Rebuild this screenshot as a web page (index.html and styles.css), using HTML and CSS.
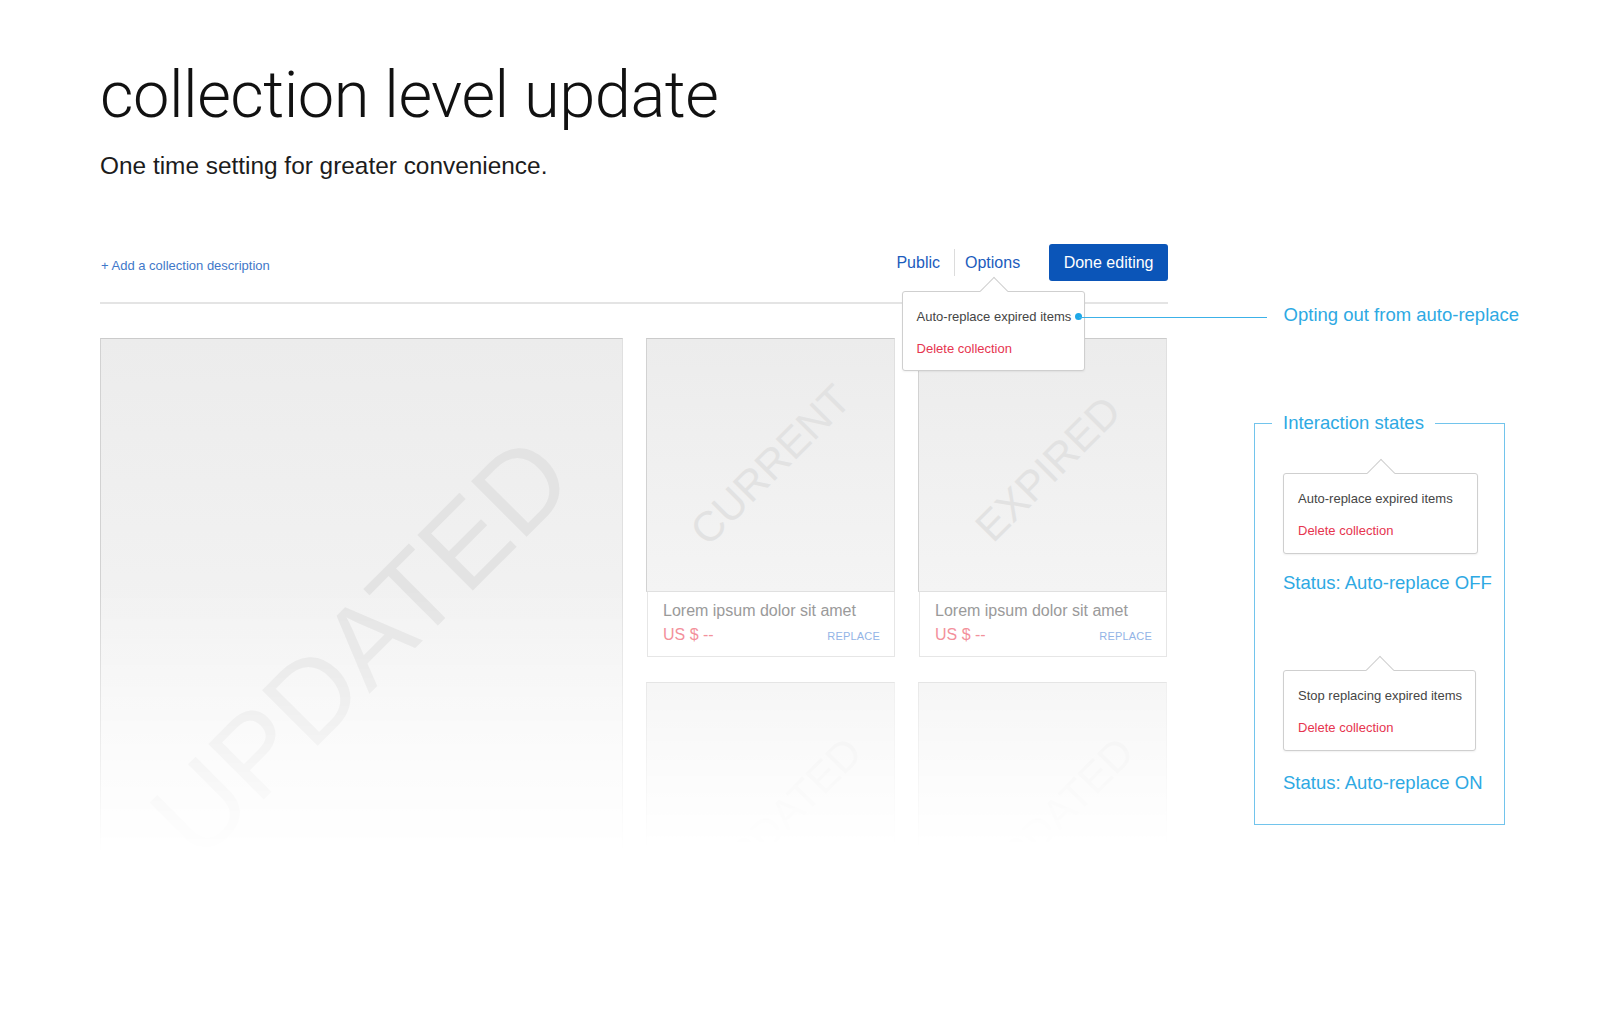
FILE: index.html
```html
<!DOCTYPE html>
<html lang="en">
<head>
<meta charset="utf-8">
<title>collection level update</title>
<link rel="stylesheet" href="styles.css">
</head>
<body>
<div class="page">
  <header class="intro">
    <h1 class="title">collection level update</h1>
    <p class="subtitle">One time setting for greater convenience.</p>
  </header>

  <div class="workspace">
    <section class="editor">
      <div class="toolbar">
        <a class="add-desc">+ Add a collection description</a>
        <div class="actions">
          <span class="link">Public</span>
          <span class="sep"></span>
          <span class="link options">Options
            <span class="menu menu-top">
              <span class="menu-item callout-item">Auto-replace expired items
                <span class="dot"></span>
                <span class="callout-line"></span>
                <span class="callout-text">Opting out from auto-replace</span>
              </span>
              <span class="menu-item danger">Delete collection</span>
            </span>
          </span>
          <button class="done">Done editing</button>
        </div>
      </div>

      <div class="grid">
        <div class="card card-big">
          <div class="thumb thumb-big"><span class="wm wm-big">UPDATED</span></div>
        </div>

        <div class="card">
          <div class="thumb"><span class="wm">CURRENT</span></div>
          <div class="info">
            <div class="name">Lorem ipsum dolor sit amet</div>
            <div class="row"><span class="price">US $ --</span><span class="replace">REPLACE</span></div>
          </div>
        </div>

        <div class="card">
          <div class="thumb"><span class="wm wm-exp">EXPIRED</span></div>
          <div class="info">
            <div class="name">Lorem ipsum dolor sit amet</div>
            <div class="row"><span class="price">US $ --</span><span class="replace">REPLACE</span></div>
          </div>
        </div>

        <div class="card card-fade">
          <div class="thumb"><span class="wm wm-low">UPDATED</span></div>
        </div>

        <div class="card card-fade">
          <div class="thumb"><span class="wm wm-low">UPDATED</span></div>
        </div>
      </div>
    </section>

    <aside class="notes">
      <fieldset class="states">
        <legend class="states-title">Interaction states</legend>
        <div class="states-body">
          <div class="pop pop-first">
            <div class="menu-item">Auto-replace expired items</div>
            <div class="menu-item danger">Delete collection</div>
          </div>
          <div class="status">Status: Auto-replace OFF</div>

          <div class="pop pop-second">
            <div class="menu-item">Stop replacing expired items</div>
            <div class="menu-item danger">Delete collection</div>
          </div>
          <div class="status status-on">Status: Auto-replace ON</div>
        </div>
      </fieldset>
    </aside>
  </div>
</div>
</body>
</html>
```

FILE: styles.css
```css
* { box-sizing: border-box; }

html, body {
  margin: 0;
  padding: 0;
  background: #ffffff;
}

body {
  font-family: "Liberation Sans", Arial, sans-serif;
  color: #222;
  overflow: hidden;
}

.page {
  padding: 0 0 0 100px;
  width: 1600px;
  height: 1016px;
}

/* ---------- intro ---------- */
.intro {
  padding-top: 62px;
}

.title {
  margin: 0;
  font-family: "Roboto", "Liberation Sans", sans-serif;
  font-weight: 300;
  font-size: 65px;
  line-height: 67px;
  color: #111;
  letter-spacing: -0.5px;
}

.subtitle {
  margin: 23px 0 0;
  font-size: 24.4px;
  line-height: 28px;
  color: #1c1c1c;
}

/* ---------- workspace ---------- */
.workspace {
  display: flex;
  align-items: flex-start;
  gap: 86px;
  margin-top: 64px;
}

.editor {
  width: 1068px;
  flex: none;
}

.toolbar {
  display: flex;
  align-items: center;
  justify-content: space-between;
  padding: 0 0 21px 1px;
  border-bottom: 2px solid #e4e4e4;
}

.add-desc {
  font-size: 13px;
  color: #3f78c9;
  margin-top: 5px;
  cursor: pointer;
}

.actions {
  display: flex;
  align-items: center;
}

.link {
  font-size: 16px;
  line-height: 20px;
  color: #1c5cbd;
}

.sep {
  width: 1px;
  height: 27px;
  background: #dcdcdc;
  margin: 0 10px 0 14px;
}

.options {
  position: relative;
}

.done {
  margin-left: 29px;
  height: 37px;
  padding: 0 14.5px;
  border: none;
  border-radius: 3px;
  background: #0b55b8;
  color: #fff;
  font-family: "Liberation Sans", Arial, sans-serif;
  font-size: 16px;
}

/* ---------- menus ---------- */
.menu,
.pop {
  display: block;
  background: #fff;
  border: 1px solid #cfcfcf;
  border-radius: 3px;
  box-shadow: 0 1px 2px rgba(0, 0, 0, 0.06);
}

.menu::before,
.pop::before {
  content: "";
  position: absolute;
  width: 19px;
  height: 19px;
  top: -11px;
  left: calc(50% - 9.5px);
  background: #fff;
  border-top: 1px solid #cfcfcf;
  border-left: 1px solid #cfcfcf;
  transform: rotate(45deg);
}

.menu-top {
  position: absolute;
  z-index: 5;
  top: 38px;
  left: 50%;
  margin-left: -91px;
  width: 183px;
  padding: 9px 0 5px;
}

.menu-item {
  display: block;
  position: relative;
  padding: 0 14px;
  font-size: 13px;
  line-height: 32px;
  color: #454545;
  white-space: nowrap;
}

.menu-item.danger {
  color: #e6354f;
}

.dot {
  position: absolute;
  right: 1.5px;
  top: calc(50% - 3.5px);
  width: 7px;
  height: 7px;
  border-radius: 50%;
  background: #1ea8e8;
}

.callout-line {
  position: absolute;
  left: calc(100% - 5px);
  top: 50%;
  width: 188px;
  height: 1px;
  background: #3cb1e8;
}

.callout-text {
  position: absolute;
  left: calc(100% + 200px);
  top: calc(50% - 13px);
  font-size: 18.5px;
  line-height: 22px;
  color: #2ea9e3;
  white-space: nowrap;
}

/* ---------- grid ---------- */
.grid {
  display: grid;
  grid-template-columns: 523px 249px 249px;
  column-gap: 23px;
  row-gap: 25px;
  margin-top: 34px;
}

.card {
  display: flex;
  flex-direction: column;
}

.card-big {
  grid-row: span 2;
  -webkit-mask-image: linear-gradient(to bottom, #000 0, #000 250px, transparent 515px);
  mask-image: linear-gradient(to bottom, #000 0, #000 250px, transparent 515px);
}

.card-fade {
  -webkit-mask-image: linear-gradient(to bottom, rgba(0,0,0,0.5) 0, transparent 166px);
  mask-image: linear-gradient(to bottom, rgba(0,0,0,0.5) 0, transparent 166px);
}

.thumb {
  position: relative;
  overflow: hidden;
  height: 254px;
  display: flex;
  align-items: center;
  justify-content: center;
  background: linear-gradient(to bottom, #ececec, #f4f4f4);
  border: 1px solid #e0e0e0;
  border-top-color: #cbcbcb;
  border-left-color: #d2d2d2;
}

.thumb-big {
  height: 100%;
  overflow: visible;
  background: linear-gradient(to bottom, #ececec 0, #f4f4f4 380px, #fafafa 663px);
}

.wm {
  font-family: "Liberation Sans", Arial, sans-serif;
  font-size: 42px;
  line-height: 1;
  color: #e2e2e2;
  white-space: nowrap;
  transform: rotate(-45deg);
}

.wm-exp {
  transform: translate(6px, 4px) rotate(-45deg);
}

.wm-low {
  transform: translate(14px, 6px) rotate(-45deg);
}

.wm-big {
  font-size: 114px;
  color: #e3e3e3;
  transform: translate(0px, 10px) rotate(-45deg);
}

.info {
  margin-left: 1px;
  padding: 8px 14px 9px 15px;
  border: 1px solid #e6e6e6;
  border-top: none;
  background: #fff;
}

.name {
  font-size: 16px;
  line-height: 22px;
  color: #9a9a9a;
}

.row {
  display: flex;
  justify-content: space-between;
  align-items: baseline;
  margin-top: 2px;
  line-height: 22px;
}

.price {
  font-size: 16px;
  color: #f3919b;
}

.replace {
  font-size: 11px;
  color: #93b4e6;
  letter-spacing: 0.2px;
}

/* ---------- notes ---------- */
.notes {
  width: 251px;
  flex: none;
  margin-top: 168px;
}

.states {
  margin: 0;
  padding: 0 0 30px 17px;
  border: 1px solid #72c4ec;
  min-width: 0;
}

.states-title {
  padding: 0 11px;
  font-size: 18.5px;
  line-height: 22px;
  color: #2ea9e3;
}

.states-body {
  margin-left: 11px;
}

.pop {
  position: relative;
  padding: 9px 0 6px;
}

.pop-first {
  width: 195px;
  margin-top: 39px;
}

.pop-second {
  width: 193px;
  margin-top: 76px;
}

.status {
  margin-top: 18px;
  font-size: 18.5px;
  line-height: 22px;
  color: #2ea9e3;
  white-space: nowrap;
}

.status-on {
  margin-top: 21px;
}
```
